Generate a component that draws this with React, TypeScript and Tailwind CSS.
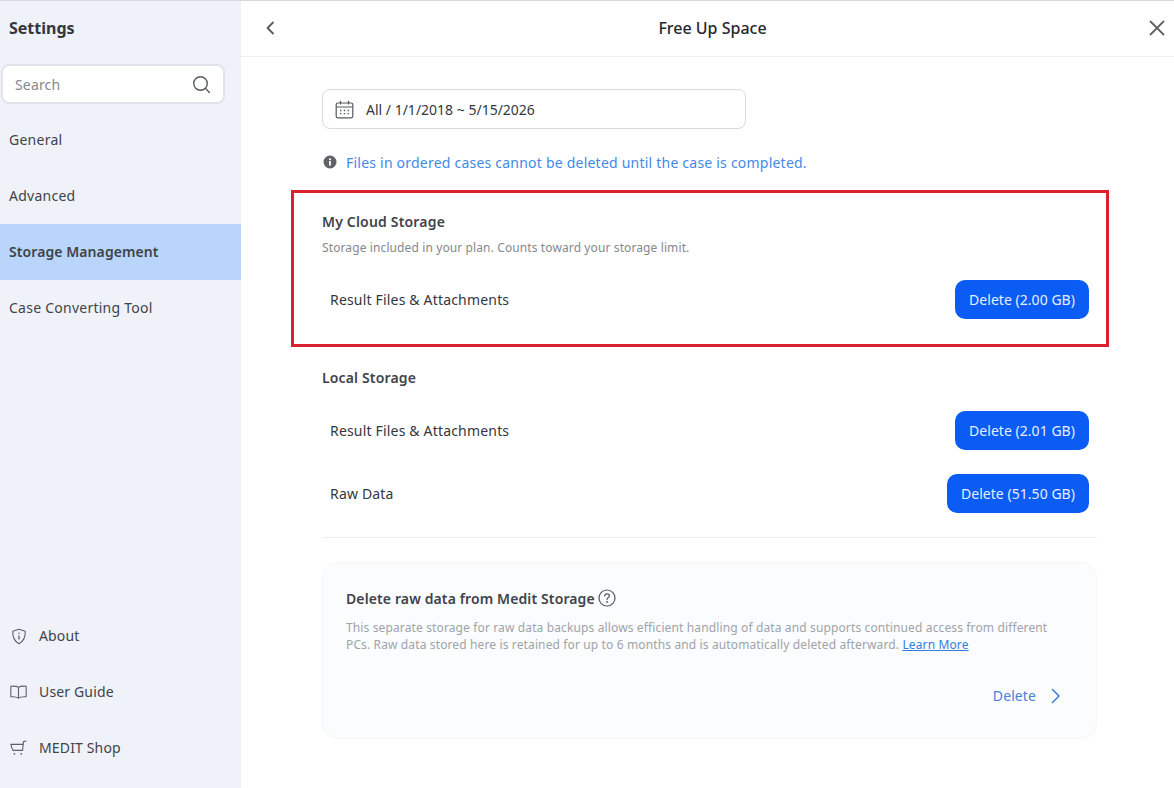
import React from "react";

function NavItem({ label, active }: { label: string; active?: boolean }) {
  return (
    <div className={`h-14 flex items-center pl-[9px] pb-[2px] text-[14px] text-[#3f434a] ${active ? "bg-[#b9d5fb] font-semibold tracking-[0.08px]" : "tracking-[0.25px]"}`}>
      {label}
    </div>
  );
}

function FootItem({ label, icon }: { label: string; icon: React.ReactNode }) {
  return (
    <div className="h-14 flex items-center pl-[10px] text-[14px] tracking-[0.15px] text-[#3f434a]">
      <span className="w-[17px] h-[17px] mr-3 flex items-center justify-center">{icon}</span>
      <span className="mb-[2px]">{label}</span>
    </div>
  );
}

function Row({ label, btn, className }: { label: string; btn: string; className?: string }) {
  return (
    <div className={`flex items-center justify-between pl-2 pr-2 ${className ?? ""}`}>
      <span className="text-[14px] tracking-[0.18px] text-[#33373d]">{label}</span>
      <button className="h-[39px] px-[14px] rounded-[10px] bg-[#0a5cf5] text-[14px] tracking-[0.04px] text-[#e6efff]">{btn}</button>
    </div>
  );
}

export default function App() {
  return (
    <div className="w-[1174px] h-[788px] overflow-hidden flex bg-white text-[#33373d] border-t border-t-[#d9d9d9] font-['Noto_Sans','Liberation_Sans',sans-serif]">
      <aside className="w-[241px] shrink-0 bg-[#eff2f8] flex flex-col pb-3">
        <div className="h-[63px] flex items-center pl-[9px] pb-[9px] text-[16px] font-bold text-[#33373d]">Settings</div>
        <div className="ml-[1px] w-[224px] h-[40px] bg-white border-2 border-[#e0e3e7] rounded-[8px] flex items-center justify-between pl-3 pr-[12px]">
          <span className="text-[14px] tracking-[0.15px] text-[#85888d]">Search</span>
          <svg width="19" height="19" viewBox="0 0 19 19" fill="none" stroke="#55585d" strokeWidth="1.4" strokeLinecap="round">
            <circle cx="8.5" cy="8.5" r="6.8" />
            <path d="M13.6 13.6 L17.4 17.4" />
          </svg>
        </div>
        <div className="h-2" />
        <NavItem label="General" />
        <NavItem label="Advanced" />
        <NavItem label="Storage Management" active />
        <NavItem label="Case Converting Tool" />
        <div className="flex-1" />
        <FootItem
          label="About"
          icon={
            <svg width="16" height="17" viewBox="0 0 16 17" fill="none" stroke="#5f6267" strokeWidth="1.1" strokeLinejoin="round">
              <path d="M8 1.2 L14.2 3.2 C14.6 8.6 13 13 8 15.8 C3 13 1.4 8.6 1.8 3.2 Z" />
              <path d="M8 7.4 V11.6" strokeWidth="1.3" />
              <circle cx="8" cy="5.3" r="0.8" fill="#5f6267" stroke="none" />
            </svg>
          }
        />
        <FootItem
          label="User Guide"
          icon={
            <svg width="17" height="15" viewBox="0 0 17 15" fill="none" stroke="#5f6267" strokeWidth="1.1" strokeLinejoin="round">
              <path d="M8.5 2.2 C7 1.2 4 1 0.8 1.2 V11.8 C4 11.6 7 11.8 8.5 13.2 C10 11.8 13 11.6 16.2 11.8 V1.2 C13 1 10 1.2 8.5 2.2 Z" />
              <path d="M8.5 2.2 V13.2" />
            </svg>
          }
        />
        <FootItem
          label="MEDIT Shop"
          icon={
            <svg width="17" height="16" viewBox="0 0 17 16" fill="none" stroke="#5f6267" strokeWidth="1.1" strokeLinejoin="round" strokeLinecap="round">
              <path d="M16 1 L13.4 1.6 L12.6 10.4 H3.2" />
              <path d="M1 4.4 H13.2" />
              <path d="M1 4.4 C1.2 7 2 9 3.4 10.4" />
              <circle cx="4.4" cy="13.8" r="0.9" fill="#5f6267" stroke="none" />
              <circle cx="11.2" cy="13.8" r="0.9" fill="#5f6267" stroke="none" />
            </svg>
          }
        />
      </aside>

      <main className="flex-1 flex flex-col min-w-0">
        <header className="h-[56px] shrink-0 border-b border-[#eceef0] flex items-center justify-between pb-[2px] pl-[24px] pr-[9px]">
          <svg width="10" height="14" viewBox="0 0 10 14" fill="none" stroke="#55585d" strokeWidth="1.8" strokeLinecap="round" strokeLinejoin="round">
            <path d="M8 1.5 L2.5 7 L8 12.5" />
          </svg>
          <span className="ml-[1px] text-[16px] font-medium text-[#26292e]">Free Up Space</span>
          <svg width="16" height="16" viewBox="0 0 16 16" fill="none" stroke="#5f6267" strokeWidth="1.8" strokeLinecap="round">
            <path d="M1.5 1.5 L14.5 14.5 M14.5 1.5 L1.5 14.5" />
          </svg>
        </header>

        <div className="pl-[81px] pr-[77px] pt-[32px] flex flex-col">
          <div className="w-[424px] h-[40px] border border-[#d8dadd] rounded-[8px] flex items-center pl-3 text-[14px] text-[#33373d]">
            <svg width="19" height="19" viewBox="0 0 19 19" fill="none" stroke="#55585d" strokeWidth="1.2" className="mr-[12px]">
              <rect x="1.2" y="3" width="16.6" height="14.8" rx="1.5" />
              <path d="M1.2 7 H17.8 M5.5 0.8 V4.6 M13.5 0.8 V4.6" />
              <path d="M5 10.5 H6.4 M8.8 10.5 H10.2 M12.6 10.5 H14 M5 13.6 H6.4 M8.8 13.6 H10.2 M12.6 13.6 H14" strokeWidth="1.4" />
            </svg>
            All / 1/1/2018 ~ 5/15/2026
          </div>

          <div className="mt-[23px] h-[20px] flex items-center text-[14px] text-[#3f8ae6] tracking-[0.22px]">
            <svg width="14" height="14" viewBox="0 0 14 14" className="ml-[1px] mr-[9px]">
              <circle cx="7" cy="7" r="6.5" fill="#5f6267" />
              <rect x="6.1" y="6" width="1.8" height="4.6" fill="#fff" />
              <circle cx="7" cy="4.2" r="1.05" fill="#fff" />
            </svg>
            Files in ordered cases cannot be deleted until the case is completed.
          </div>

          <section className="-ml-[31px] -mr-[12px] mt-[18px] h-[157px] border-[3px] border-[#d9212f] pl-[28px] pr-[9px] pt-[16px]">
            <h2 className="text-[14px] leading-[26px] tracking-[0.18px] font-semibold text-[#3f434a]">My Cloud Storage</h2>
            <p className="mt-[4px] text-[12px] leading-[18px] tracking-[0.11px] text-[#85888d]">Storage included in your plan. Counts toward your storage limit.</p>
            <Row label="Result Files & Attachments" btn="Delete (2.00 GB)" className="mt-[23px]" />
          </section>

          <h2 className="mt-[18px] text-[14px] leading-[26px] tracking-[0.15px] font-semibold text-[#3f434a]">Local Storage</h2>
          <Row label="Result Files & Attachments" btn="Delete (2.01 GB)" className="mt-[20px]" />
          <Row label="Raw Data" btn="Delete (51.50 GB)" className="mt-[24px]" />
          <div className="mt-[24px] border-t border-[#eceef0]" />

          <section className="mt-[24px] h-[177px] rounded-[16px] border border-[#f4f6f8] bg-[#fbfcfe] pl-[23px] pr-[30px] pt-[25px] flex flex-col">
            <div className="flex items-center h-[20px] text-[14px] tracking-[0.12px] font-semibold text-[#3f434a]">
              Delete raw data from Medit Storage
              <svg width="18" height="18" viewBox="0 0 18 18" fill="none" stroke="#55585d" strokeWidth="1.2" className="ml-[3px]">
                <circle cx="9" cy="9" r="8" />
                <path d="M6.6 7 C6.6 5.6 7.7 4.8 9 4.8 C10.4 4.8 11.4 5.7 11.4 6.9 C11.4 8.4 9 8.6 9 10.6" strokeLinecap="round" />
                <circle cx="9" cy="13" r="0.9" fill="#55585d" stroke="none" />
              </svg>
            </div>
            <p className="mt-[11px] text-[12px] leading-[17px] tracking-[0.13px] text-[#a0a3a8]">
              This separate storage for raw data backups allows efficient handling of data and supports continued access from different PCs. Raw data stored here is retained for up to 6 months and is automatically deleted afterward.{" "}
              <span className="text-[#2f7fe0] underline">Learn More</span>
            </p>
            <div className="mt-[32px] flex items-center justify-end text-[14px] tracking-[0.1px] text-[#4a80dc]">
              Delete
              <svg width="10" height="16" viewBox="0 0 10 16" fill="none" stroke="#3f78d8" strokeWidth="1.5" strokeLinecap="round" strokeLinejoin="round" className="ml-[15px] mr-[5px]">
                <path d="M1.5 1.5 L8 8 L1.5 14.5" />
              </svg>
            </div>
          </section>
        </div>
      </main>
    </div>
  );
}
